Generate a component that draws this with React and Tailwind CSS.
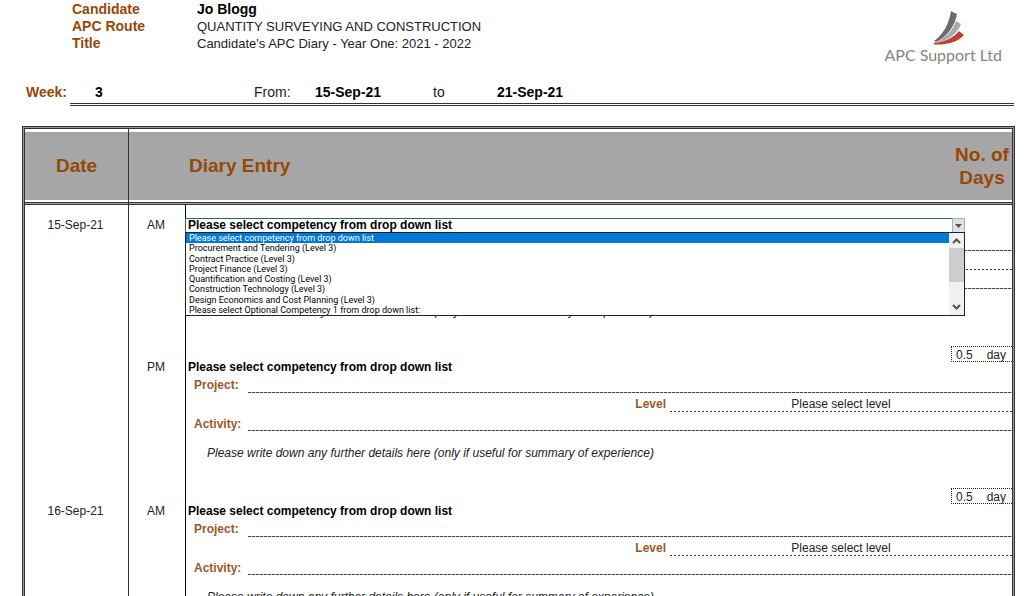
import { useState } from 'react';

const COMPETENCIES = [
  'Please select competency from drop down list',
  'Procurement and Tendering (Level 3)',
  'Contract Practice (Level 3)',
  'Project Finance (Level 3)',
  'Quantification and Costing (Level 3)',
  'Construction Technology (Level 3)',
  'Design Economics and Cost Planning (Level 3)',
  'Please select Optional Competency 1 from drop down list:',
];

const LEVELS = ['Please select level', 'Level 1', 'Level 2', 'Level 3'];

const ENTRIES = [
  { id: '15-am', date: '15-Sep-21', slot: 'AM', pad: 'pt-[14px]', open: true },
  { id: '15-pm', date: '', slot: 'PM', pad: 'pt-0' },
  { id: '16-am', date: '16-Sep-21', slot: 'AM', pad: 'pt-[2px]' },
];

const dashed =
  'bg-[repeating-linear-gradient(90deg,#444_0_3px,#ccc_3px_4px)] bg-[length:100%_1px] bg-bottom bg-no-repeat';
const dotted =
  'bg-[repeating-linear-gradient(90deg,#333_0_2px,transparent_2px_4px)] bg-[length:100%_1px] bg-bottom bg-no-repeat';

function Logo() {
  return (
    <div className="flex flex-col items-center pt-[11px] text-[#858585]">
      <svg className="ml-3" width="32" height="35" viewBox="0 0 32 35" aria-hidden="true">
        <path d="M18 0C20 1 21 2 24 3C22 15 14 26 3 31L1 30C11 23 16 12 18 0Z" fill="#6c6c6e" />
        <path d="M23 10C25 11 26 12 28 13C25 22 15 30 2 32L2 31.500C13 27 20 19 23 10Z" fill="#a9a9ab" />
        <path d="M26 20L31 24C25 31 14 34 1 33.500L1 32C12 31 20 27 26 20Z" fill="#bf4030" />
      </svg>
      <span className="font-['Lato',sans-serif] text-base leading-[18px]">APC Support Ltd</span>
    </div>
  );
}

function CompetencyPicker({ startOpen }) {
  const [open, setOpen] = useState(Boolean(startOpen));
  const [value, setValue] = useState(COMPETENCIES[0]);

  const pick = (item) => {
    setValue(item);
    setOpen(false);
  };

  return (
    <div className="relative mr-[47px]">
      <button
        type="button"
        aria-haspopup="listbox"
        aria-expanded={open}
        onClick={() => setOpen(!open)}
        className="block h-3 w-full pl-[2px] text-left font-bold leading-3 text-black"
      >
        {value}
      </button>
      {open && (
        <>
          <div className="pointer-events-none absolute -top-px -left-px right-0 flex h-[15px]">
            <span className="flex-1 border-t border-l border-[#217346]" />
            <span className="flex w-[13px] items-center justify-center border border-[#a8b0b8] bg-[#dde3ea]">
              <svg width="7" height="4" viewBox="0 0 7 4" aria-hidden="true">
                <path d="M0 0H7L3.500 4Z" fill="#555" />
              </svg>
            </span>
          </div>
          <div className="absolute top-[13px] -left-px right-0 z-10 flex h-[84px] border border-[#222] bg-white">
            <ul
              role="listbox"
              aria-label="Competency"
              className="flex flex-1 flex-col font-['Roboto',sans-serif] text-[9px] leading-[10px] text-black"
            >
              {COMPETENCIES.map((item) => (
                <li
                  key={item}
                  role="option"
                  aria-selected={item === value}
                  onClick={() => pick(item)}
                  className="flex-1 pl-[3px] aria-selected:bg-[#0078d7] aria-selected:text-white"
                >
                  {item}
                </li>
              ))}
            </ul>
            <div className="flex w-[15px] flex-col items-center bg-[#f0f0f0]">
              <svg width="15" height="15" viewBox="0 0 15 15" fill="none" stroke="#505050" strokeWidth="2" aria-hidden="true">
                <path d="M4 10L7.500 6.500L11 10" />
              </svg>
              <div className="h-[34px] w-full bg-[#cdcdcd]" />
              <svg className="mt-auto" width="15" height="15" viewBox="0 0 15 15" fill="none" stroke="#505050" strokeWidth="2" aria-hidden="true">
                <path d="M4 5L7.500 8.500L11 5" />
              </svg>
            </div>
          </div>
        </>
      )}
    </div>
  );
}

function TextLine({ id, label, height }) {
  return (
    <div className={`flex ${height}`}>
      <label htmlFor={id} className="w-[62px] pt-1 pl-2 font-bold leading-4 text-[#a0562a]">
        {label}
      </label>
      <input id={id} type="text" className={`min-w-0 flex-1 outline-none ${dashed}`} />
    </div>
  );
}

function DiaryEntry({ entry }) {
  return (
    <div className={entry.pad}>
      <CompetencyPicker startOpen={entry.open} />
      <TextLine id={`${entry.id}-project`} label="Project:" height="h-5" />
      <div className="flex h-[19px]">
        <label
          htmlFor={`${entry.id}-level`}
          className="w-[484px] pt-[3px] pr-1 text-right font-bold leading-4 text-[#a0562a]"
        >
          Level
        </label>
        <select
          id={`${entry.id}-level`}
          className={`min-w-0 flex-1 appearance-none pt-[3px] text-center leading-4 outline-none [text-align-last:center] ${dotted}`}
        >
          {LEVELS.map((level) => (
            <option key={level}>{level}</option>
          ))}
        </select>
      </div>
      <TextLine id={`${entry.id}-activity`} label="Activity:" height="h-[19px]" />
      <div className="h-[57px] pt-3 pl-[21px]">
        <input
          type="text"
          aria-label="Further details"
          defaultValue="Please write down any further details here (only if useful for summary of experience)"
          className="h-5 w-full italic leading-5 outline-none"
        />
      </div>
      <div className="flex h-[15px] justify-end">
        <label className="flex h-4 w-[61px] items-center justify-between border border-r-0 border-dotted border-[#222] pt-px pr-[6px] pl-1 leading-[14px]">
          <input type="text" defaultValue="0.5" className="w-6 outline-none" />
          day
        </label>
      </div>
    </div>
  );
}

const th =
  'h-[76px] border-b-3 border-double border-b-[#333] bg-[#a6a6a6] p-0 align-middle shadow-[inset_0_3px_white,inset_0_-2px_white]';

export default function App() {
  return (
    <div className="h-screen overflow-hidden bg-white font-['Liberation_Sans',Arial,sans-serif] text-xs text-[#222]">
      <header className="flex h-[79px] items-start justify-between pr-[22px] pl-[72px]">
        <dl className="grid grid-cols-[125px_auto] pt-px text-sm leading-[17px]">
          <dt className="font-bold text-[#974706]">Candidate</dt>
          <dd className="font-bold text-black">Jo Blogg</dd>
          <dt className="font-bold text-[#974706]">APC Route</dt>
          <dd className="text-[13px]">QUANTITY SURVEYING AND CONSTRUCTION</dd>
          <dt className="font-bold text-[#974706]">Title</dt>
          <dd className="text-[13px]">Candidate&apos;s APC Diary - Year One: 2021 - 2022</dd>
        </dl>
        <Logo />
      </header>

      <section className="flex h-[27px] pr-[10px] pl-[26px] text-sm leading-[26px]">
        <span className="w-11 font-bold text-[#974706]">Week:</span>
        <div className="flex flex-1 border-b-3 border-double border-[#333]">
          <span className="w-[184px] pl-[25px] font-bold text-black">3</span>
          <span className="w-[61px]">From:</span>
          <span className="w-[118px] font-bold text-black">15-Sep-21</span>
          <span className="w-16">to</span>
          <span className="font-bold text-black">21-Sep-21</span>
        </div>
      </section>

      <main className="pt-5 pr-[9px] pl-[22px]">
        <table className="w-full table-fixed border-separate border-spacing-0 border-3 border-double border-[#333] bg-[#999]">
          <colgroup>
            <col className="w-[104px]" />
            <col className="w-[57px]" />
            <col />
            <col className="w-[60px]" />
          </colgroup>
          <thead className="text-[19px] leading-[23px] text-[#974706]">
            <tr>
              <th scope="col" className={`${th} border-r border-r-[#333] [border-right-style:solid]`}>Date</th>
              <th scope="col" colSpan={2} className={`${th} pl-[60px] text-left`}>Diary Entry</th>
              <th scope="col" className={th}>No. of Days</th>
            </tr>
          </thead>
          <tbody className="bg-white">
            {ENTRIES.map((entry) => (
              <tr key={entry.id} className="align-top">
                <td className="border-r border-[#333] p-0 pr-[2px] text-center leading-3">
                  <div className={entry.pad}>{entry.date}</div>
                </td>
                <td className="border-r border-black p-0 pr-[2px] text-center leading-3">
                  <div className={entry.pad}>{entry.slot}</div>
                </td>
                <td colSpan={2} className="p-0">
                  <DiaryEntry entry={entry} />
                </td>
              </tr>
            ))}
          </tbody>
        </table>
      </main>
    </div>
  );
}
